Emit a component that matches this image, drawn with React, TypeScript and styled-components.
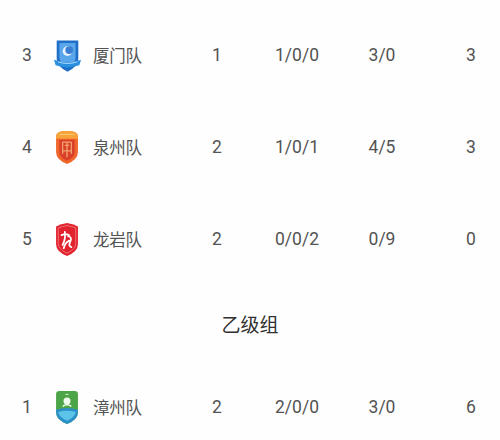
import React from 'react';
import styled, {createGlobalStyle} from 'styled-components';

const GlobalStyle = createGlobalStyle`
  html, body {
    margin: 0;
    padding: 0;
    background: #fff;
    overflow: hidden;
  }
  body {
    font-family: Roboto, "Noto Sans CJK SC", sans-serif;
  }
`;

const Page = styled.div`
  width: 500px;
  height: 440px;
  padding-top: 9px;
  box-sizing: border-box;
  background: #fefefe;
`;

const Row = styled.div`
  display: grid;
  grid-template-columns: 54px 39px 84px 80px 80px 90px 1fr;
  align-items: center;
  height: 92px;
  font-size: 17.5px;
  color: #535353;
`;

const Cell = styled.div<{align?: 'left' | 'center'; pad?: number}>`
  text-align: ${props => props.align === 'left' ? 'left' : 'center'};
  padding-left: ${props => props.pad ?? 0}px;
  white-space: nowrap;
`;

const TeamName = styled(Cell)`
  font-family: "Noto Sans CJK SC", Roboto, sans-serif;
  font-size: 16.5px;
  letter-spacing: -0.3px;
`;

const Logo = styled.div`
  display: flex;
  align-items: center;
  height: 36px;
`;

const GroupTitle = styled.div`
  display: flex;
  align-items: center;
  justify-content: center;
  height: 76px;
  font-family: "Noto Sans CJK SC", sans-serif;
  font-size: 19px;
  color: #303030;
`;

const XiamenLogo = () => (
	<svg width="27" height="35" viewBox="0.5 0 25 32">
		<path d="M3 2 L23 2 L23 19 Q23 26 13 31 Q3 26 3 19 Z" fill="#1f6fc9"/>
		<path d="M5.5 4.5 L20.5 4.5 L20.5 18 Q20.5 23 13 27 Q5.5 23 5.5 18 Z" fill="#5aa6ea"/>
		<circle cx="13" cy="12" r="4.5" fill="#e8f3ff"/>
		<circle cx="14.6" cy="11" r="3.6" fill="#3a7fd3"/>
		<path d="M0.5 20 Q13 25 25.5 20 L24 25 Q13 29 2 25 Z" fill="#2b8fe0"/>
		<path d="M4 21.8 Q13 25 22 21.8" stroke="#c9e6ff" strokeWidth="0.8" fill="none"/>
	</svg>
);

const QuanzhouLogo = () => (
	<svg width="26" height="35" viewBox="1.5 0 23 32">
		<path d="M3 6 Q3 1 13 1 Q23 1 23 6 L23 20 Q23 27 13 31 Q3 27 3 20 Z" fill="#f0662b"/>
		<path d="M3 6 Q3 1 13 1 Q23 1 23 6 L23 8 L3 8 Z" fill="#f7a23a"/>
		<path d="M6 9 L20 9 L20 20 Q20 25 13 28 Q6 25 6 20 Z" fill="#d9402a"/>
		<path d="M9 11 L17 11 M9 11 L9 22 M17 11 L17 22 M11 14 L15 14 M13 11 L13 25 M9 19 L17 19" stroke="#f4a06a" strokeWidth="1.2" fill="none"/>
		<path d="M6 4 L20 4" stroke="#fbd27a" strokeWidth="0.8"/>
	</svg>
);

const LongyanLogo = () => (
	<svg width="26" height="35" viewBox="1.5 0 23 32">
		<path d="M3 4 Q8 2 13 1 Q18 2 23 4 L23 20 Q23 27 13 31 Q3 27 3 20 Z" fill="#e0232e"/>
		<path d="M5 5.5 Q9 4 13 3.2 Q17 4 21 5.5 L21 19.5 Q21 25 13 28.5 Q5 25 5 19.5 Z" fill="none" stroke="#f47a80" strokeWidth="0.8"/>
		<path d="M8 12 Q12 10 15 12 M11 9 Q12 15 9 21 M14 13 Q18 14 16 18 Q14 22 17 23 M15 17 Q11 19 10 24" stroke="#fff" strokeWidth="1.6" fill="none" strokeLinecap="round"/>
	</svg>
);

const ZhangzhouLogo = () => (
	<svg width="26" height="35" viewBox="1.5 0 23 32">
		<path d="M3 4 Q3 1 6 1 L20 1 Q23 1 23 4 L23 20 Q23 27 13 31 Q3 27 3 20 Z" fill="#4ca546"/>
		<path d="M3 18 Q13 15 23 18 L23 20 Q23 27 13 31 Q3 27 3 20 Z" fill="#2d8fc8"/>
		<path d="M5 20 Q13 18 21 20 Q20 25 13 28 Q6 25 5 20 Z" fill="#5cc4e8"/>
		<circle cx="13" cy="10" r="3.2" fill="#f2fbef"/>
		<path d="M9 15 Q13 12 17 15" stroke="#f2fbef" strokeWidth="1.4" fill="none"/>
		<path d="M11.5 4 L14.5 4" stroke="#cdebc6" strokeWidth="1"/>
	</svg>
);

type Team = {
	rank: number;
	name: string;
	logo: React.ReactNode;
	played: number;
	record: string;
	goals: string;
	points: number;
};

const groupA: Team[] = [
	{rank: 3, name: '厦门队', logo: <XiamenLogo/>, played: 1, record: '1/0/0', goals: '3/0', points: 3},
	{rank: 4, name: '泉州队', logo: <QuanzhouLogo/>, played: 2, record: '1/0/1', goals: '4/5', points: 3},
	{rank: 5, name: '龙岩队', logo: <LongyanLogo/>, played: 2, record: '0/0/2', goals: '0/9', points: 0},
];

const groupB: Team[] = [
	{rank: 1, name: '漳州队', logo: <ZhangzhouLogo/>, played: 2, record: '2/0/0', goals: '3/0', points: 6},
];

const TeamRow: React.FC<{team: Team}> = ({team}) => (
	<Row>
		<Cell>{team.rank}</Cell>
		<Logo>{team.logo}</Logo>
		<TeamName align="left">{team.name}</TeamName>
		<Cell>{team.played}</Cell>
		<Cell>{team.record}</Cell>
		<Cell>{team.goals}</Cell>
		<Cell pad={15}>{team.points}</Cell>
	</Row>
);

const App: React.FC = () => (
	<>
		<GlobalStyle/>
		<Page>
			{groupA.map(team => <TeamRow key={team.name} team={team}/>)}
			<GroupTitle>乙级组</GroupTitle>
			{groupB.map(team => <TeamRow key={team.name} team={team}/>)}
		</Page>
	</>
);

export default App;
